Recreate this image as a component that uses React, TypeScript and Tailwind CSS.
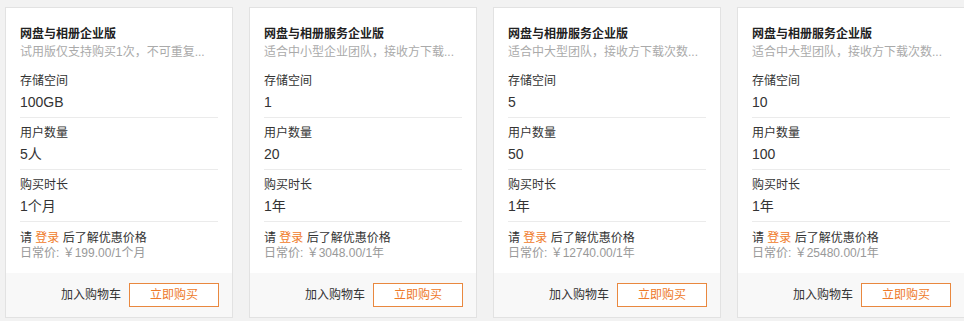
const plans = [
  {
    title: "网盘与相册企业版",
    desc: "试用版仅支持购买1次，不可重复...",
    storage: "100GB",
    users: "5人",
    duration: "1个月",
    price: "￥199.00/1个月",
  },
  {
    title: "网盘与相册服务企业版",
    desc: "适合中小型企业团队，接收方下载...",
    storage: "1",
    users: "20",
    duration: "1年",
    price: "￥3048.00/1年",
  },
  {
    title: "网盘与相册服务企业版",
    desc: "适合中大型团队，接收方下载次数...",
    storage: "5",
    users: "50",
    duration: "1年",
    price: "￥12740.00/1年",
  },
  {
    title: "网盘与相册服务企业版",
    desc: "适合中大型团队，接收方下载次数...",
    storage: "10",
    users: "100",
    duration: "1年",
    price: "￥25480.00/1年",
  },
]

function Row({ label, value }: { label: string; value: string }) {
  return (
    <div className="pt-[6px] pb-[5px] border-b border-[#ebebeb]">
      <div className="text-[12px] leading-[18px] text-[#333]">{label}</div>
      <div className="mt-[2px] text-[14px] leading-[20px] text-[#333]">{value}</div>
    </div>
  )
}

export default function App() {
  return (
    <div
      className="w-[964px] h-[321px] overflow-hidden bg-[#f2f2f2] pt-[7px] pl-[5px]"
      style={{ fontFamily: '"Liberation Sans", "Noto Sans CJK SC", sans-serif' }}
    >
      <div className="flex gap-[16px] w-max">
        {plans.map((p, i) => (
          <div key={i} className="w-[228px] h-[311px] flex flex-col bg-white border border-[#e2e2e2]">
            <div className="flex-1 px-[14px] pt-[17px]">
              <div className="text-[12px] leading-[18px] font-bold text-[#222]">{p.title}</div>
              <div className="text-[12px] leading-[18px] text-[#aaa] truncate">{p.desc}</div>
              <div className="mt-[5px]">
                <Row label="存储空间" value={p.storage} />
                <Row label="用户数量" value={p.users} />
                <Row label="购买时长" value={p.duration} />
              </div>
              <div className="pt-[9px] text-[12px] leading-[15px]">
                <div className="text-[#333]">
                  请 <span className="text-[#f07b2b]">登录</span> 后了解优惠价格
                </div>
                <div className="text-[#999]">日常价: {p.price}</div>
              </div>
            </div>
            {/* footer */}
            <div className="h-[44px] bg-[#f8f8f8] flex items-center justify-end gap-[8px] pr-[13px]">
              <span className="text-[12px] text-[#333]">加入购物车</span>
              <button className="w-[90px] h-[24px] border border-[#e9883f] bg-white text-[12px] text-[#ee7a2a]">
                立即购买
              </button>
            </div>
          </div>
        ))}
      </div>
    </div>
  )
}
